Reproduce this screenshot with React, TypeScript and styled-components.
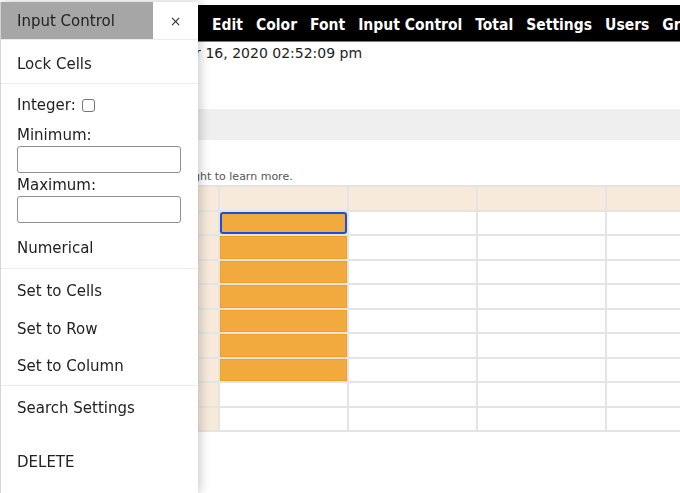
import React from 'react';
import styled, { createGlobalStyle } from 'styled-components';

const GlobalStyle = createGlobalStyle`
  html, body {
    margin: 0;
    padding: 0;
    background: #ffffff;
    overflow: hidden;
  }
  body {
    font-family: 'DejaVu Sans', Verdana, sans-serif;
    color: #222222;
  }
`;

const Page = styled.div`
  width: 680px;
  height: 493px;
  overflow: hidden;
`;

const NavBar = styled.nav`
  display: flex;
  align-items: center;
  gap: 13px;
  height: 37px;
  margin-top: 5px;
  padding: 3px 0 0 212px;
  box-sizing: border-box;
  background: #000000;
  border-bottom: 1px solid #7a7a7a;
  white-space: nowrap;
`;

const NavItem = styled.span`
  color: #ffffff;
  font-family: 'DejaVu Sans Condensed', 'DejaVu Sans', sans-serif;
  font-weight: bold;
  font-size: 15.5px;
`;

const Line = styled.div<{ $size?: number; $color?: string }>`
  display: flex;
  font-size: ${(p) => p.$size ?? 15}px;
  color: ${(p) => p.$color ?? '#222222'};
  white-space: nowrap;
`;

// the part of a line hidden under the side panel, trimmed from its left
const Hidden = styled.span<{ $width: number }>`
  display: flex;
  justify-content: flex-end;
  width: ${(p) => p.$width}px;
  overflow: hidden;
  flex-shrink: 0;
`;

const Updated = styled(Line)`
  line-height: 18px;
  padding-top: 2px;
`;

const Band = styled.div`
  height: 31px;
  margin-top: 47px;
  background: #efefef;
`;

const Hint = styled(Line)`
  line-height: 14px;
  margin-top: 30px;
`;

const Sheet = styled.div`
  display: grid;
  grid-template-columns: 40px repeat(4, 127px);
  grid-auto-rows: 22.5px;
  gap: 2px;
  width: max-content;
  margin: 1px 0 0 176px;
  padding: 2px;
  background: #e4e4e4;
`;

const Cell = styled.div<{ $head?: boolean; $filled?: boolean; $selected?: boolean }>`
  background: ${(p) => (p.$head ? '#f7eadb' : p.$filled ? '#f2a93d' : '#ffffff')};
  box-shadow: ${(p) => (p.$filled && !p.$selected ? 'inset 0 0 0 1px #f3a01c' : 'none')};
  border: ${(p) => (p.$selected ? '2px solid #1f4fd6' : 'none')};
  border-radius: ${(p) => (p.$selected ? '3px' : '0')};
`;

const Panel = styled.aside`
  position: fixed;
  top: 2px;
  left: 0;
  bottom: 0;
  width: 197px;
  display: flex;
  flex-direction: column;
  background: #ffffff;
  border-left: 1px solid #d4d4d4;
  box-shadow: 2px 0 10px rgba(0, 0, 0, 0.22);
  font-size: 15px;
  color: #222222;
`;

const PanelHeader = styled.div`
  display: flex;
  height: 37px;
  border-bottom: 1px solid #ececec;
`;

const PanelTitle = styled.div`
  display: flex;
  align-items: center;
  width: 152px;
  padding-left: 16px;
  box-sizing: border-box;
  background: #a6a6a6;
`;

const CloseButton = styled.div`
  flex: 1;
  display: flex;
  align-items: center;
  justify-content: center;
  font-size: 14px;
  color: #333333;
`;

const Section = styled.div<{ $pad?: string }>`
  display: flex;
  flex-direction: column;
  padding: ${(p) => p.$pad ?? '0'};
  border-bottom: 1px solid #ececec;
`;

const Item = styled.div<{ $pad?: string }>`
  padding: ${(p) => p.$pad ?? '10px 16px 9.5px'};
  line-height: 18px;
`;

const Field = styled.div`
  display: flex;
  flex-direction: column;
  padding: 12px 16px 0;
`;

const Label = styled.label<{ $gap?: number }>`
  display: flex;
  align-items: center;
  line-height: 18px;
  margin-top: ${(p) => p.$gap ?? 0}px;
`;

const Check = styled.span`
  width: 11px;
  height: 11px;
  margin-left: 6px;
  border: 1px solid #767676;
  border-radius: 3px;
`;

const TextBox = styled.div`
  width: 164px;
  height: 27px;
  margin-top: 2px;
  box-sizing: border-box;
  border: 1px solid #8f8f8f;
  border-radius: 3px;
`;

const Plain = styled.div`
  display: flex;
  flex-direction: column;
`;

const menu = ['Edit', 'Color', 'Font', 'Input Control', 'Total', 'Settings', 'Users', 'Groups'];

function App() {
  const rows = Array.from({ length: 10 }, (_, r) => r);
  const cols = Array.from({ length: 5 }, (_, c) => c);

  return (
    <>
      <GlobalStyle />
      <Page>
        <NavBar>
          {menu.map((m) => (
            <NavItem key={m}>{m}</NavItem>
          ))}
        </NavBar>
        <Updated $size={14}>
          <Hidden $width={201}>Last updated: November</Hidden>
          <span>&nbsp;16, 2020 02:52:09 pm</span>
        </Updated>
        <Band />
        <Hint $size={11} $color="#555555">
          <Hidden $width={193}>Select a cell and use the menu on the ri</Hidden>
          <span>ght to learn more.</span>
        </Hint>
        <Sheet>
          {rows.map((r) =>
            cols.map((c) => (
              <Cell
                key={`${r}-${c}`}
                $head={r === 0 || c === 0}
                $filled={c === 1 && r >= 1 && r <= 7}
                $selected={c === 1 && r === 1}
              />
            ))
          )}
        </Sheet>
      </Page>

      <Panel>
        <PanelHeader>
          <PanelTitle>Input Control</PanelTitle>
          <CloseButton>×</CloseButton>
        </PanelHeader>
        <Section>
          <Item $pad="15px 16px 10px">Lock Cells</Item>
        </Section>
        <Section>
          <Field>
            <Label>
              Integer:
              <Check />
            </Label>
            <Label $gap={12}>Minimum:</Label>
            <TextBox />
            <Label $gap={3}>Maximum:</Label>
            <TextBox />
          </Field>
          <Item $pad="16px 16px 11px">Numerical</Item>
        </Section>
        <Section $pad="3px 0 0">
          <Item>Set to Cells</Item>
          <Item>Set to Row</Item>
          <Item>Set to Column</Item>
        </Section>
        <Plain>
          <Item $pad="13px 16px 18px">Search Settings</Item>
          <Item $pad="18px 16px 0">DELETE</Item>
        </Plain>
      </Panel>
    </>
  );
}

export default App;
